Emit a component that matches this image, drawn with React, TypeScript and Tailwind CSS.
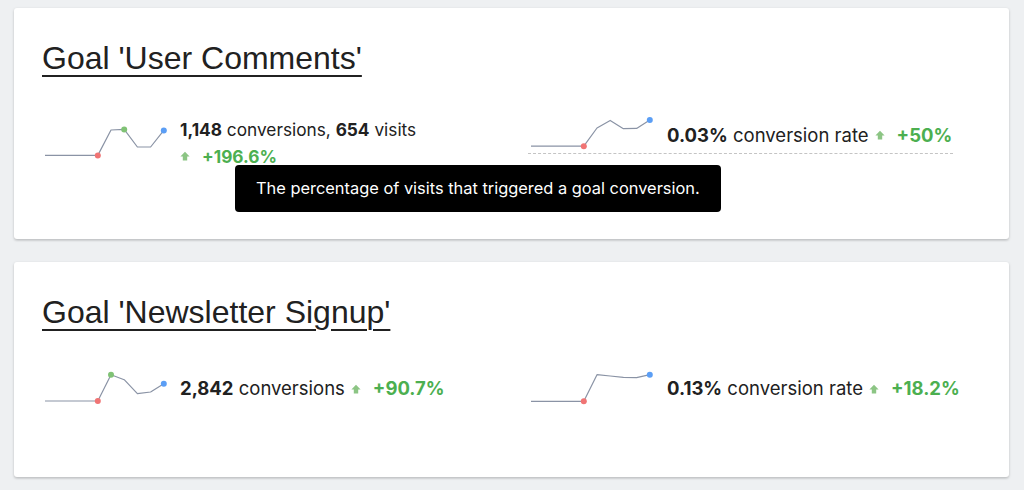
import React from "react";

type Spark = { ys: number[]; max?: number };

const STEP = 13.2;
const X0 = 3;

function Sparkline({ ys, max }: Spark) {
  const pts = ys.map((y, i) => [X0 + i * STEP, y] as const);
  const d = pts.map(([x, y], i) => `${i ? "L" : "M"}${x.toFixed(1)} ${y}`).join(" ");
  const last = pts[pts.length - 1];
  const red = pts[4];
  return (
    <svg width="126" height="36" viewBox="0 0 126 36" className="shrink-0">
      <path d={d} fill="none" stroke="#8a93a5" strokeWidth="1.2" strokeLinejoin="round" />
      <circle cx={red[0]} cy={red[1]} r="3" fill="#f07474" />
      {max !== undefined && <circle cx={pts[max][0]} cy={pts[max][1]} r="3" fill="#80c275" />}
      <circle cx={last[0]} cy={last[1]} r="3" fill="#5b9ef5" />
    </svg>
  );
}

function UpArrow() {
  return (
    <svg width="10" height="10" viewBox="0 0 10 10" className="shrink-0">
      <path d="M5 0.8 L9.6 5.4 H7.2 V9.4 H2.8 V5.4 H0.4 Z" fill="#8cc584" />
    </svg>
  );
}

function Delta({ value }: { value: string }) {
  return (
    <span className="inline-flex items-center gap-[12px]">
      <UpArrow />
      <span className="font-bold text-[#4caf50]">{value}</span>
    </span>
  );
}

function Card({ title, children }: { title: string; children: React.ReactNode }) {
  return (
    <section className="relative rounded-[3px] bg-white pb-[70px] pl-[28px] pr-[28px] pt-[31px] shadow-[0_1px_3px_rgba(0,0,0,0.18),0_2px_2px_rgba(0,0,0,0.06)]">
      <h2
        className="text-[32px] leading-[38px] text-[#212121] underline decoration-[2px] underline-offset-[6px]"
        style={{ fontFamily: '"Liberation Sans", Arial, sans-serif' }}
      >
        {title}
      </h2>
      <div className="mt-[40px] grid grid-cols-[486px_1fr] items-start">{children}</div>
    </section>
  );
}

export default function App() {
  return (
    <div
      className="flex min-h-[490px] flex-col gap-[23px] bg-[#eef0f2] pl-[14px] pr-[15px] pt-[8px] text-[18.5px] leading-[25px] text-[#212121]"
      style={{ fontFamily: 'Inter, "Liberation Sans", sans-serif' }}
    >
      <Card title="Goal 'User Comments'">
        <div className="flex items-center gap-3">
          <Sparkline ys={[30.4, 30.4, 30.4, 30.4, 30.4, 5, 4.4, 22, 22, 5.4]} max={6} />
          <div className="text-[17.25px]">
            <div>
              <b>1,148</b> conversions, <b>654</b> visits
            </div>
            <Delta value="+196.6%" />
          </div>
        </div>
        <div className="flex w-fit items-center gap-[13px] border-b border-dashed border-[#c4c4c4] pr-[1px]">
          <Sparkline ys={[29.2, 29.2, 29.2, 29.2, 29.2, 11, 3.4, 11.7, 11.4, 3]} />
          <div className="flex items-center gap-[6px]">
            <span>
              <b>0.03%</b> conversion rate
            </span>
            <Delta value="+50%" />
          </div>
        </div>
        <div className="absolute left-[221px] top-[157px] rounded-[4px] bg-black px-[21px] py-[14px] text-[16.4px] leading-[19px] text-white">
          The percentage of visits that triggered a goal conversion.
        </div>
      </Card>
      <Card title="Goal 'Newsletter Signup'">
        <div className="flex items-center gap-3">
          <Sparkline ys={[30, 30, 30, 30, 30, 3.7, 8.7, 22.7, 21, 12.7]} max={5} />
          <div className="flex items-center gap-[6px]">
            <span>
              <b>2,842</b> conversions
            </span>
            <Delta value="+90.7%" />
          </div>
        </div>
        <div className="flex items-center gap-[13px]">
          <Sparkline ys={[30.3, 30.3, 30.3, 30.3, 30.3, 3.7, 5, 6.3, 6.7, 3.7]} />
          <div className="flex items-center gap-[6px]">
            <span>
              <b>0.13%</b> conversion rate
            </span>
            <Delta value="+18.2%" />
          </div>
        </div>
      </Card>
    </div>
  );
}
